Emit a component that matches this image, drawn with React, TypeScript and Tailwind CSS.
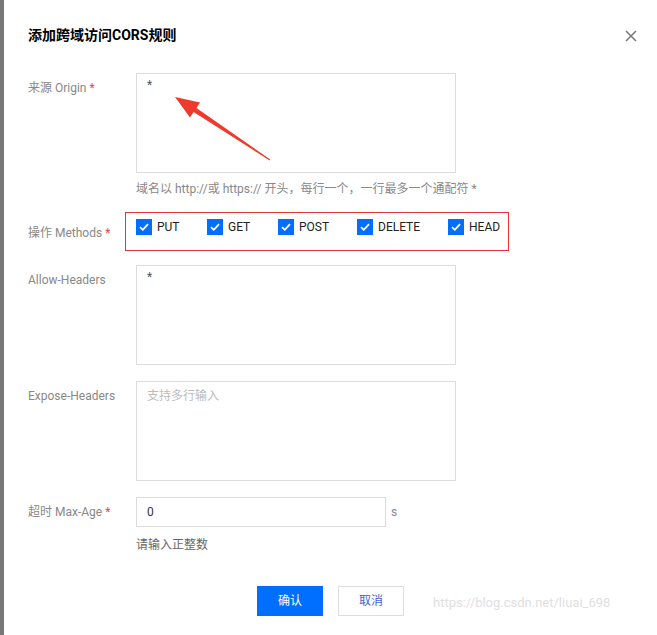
const methods = [
  { name: 'PUT', w: 'w-[71px]' },
  { name: 'GET', w: 'w-[71px]' },
  { name: 'POST', w: 'w-[79px]' },
  { name: 'DELETE', w: 'w-[91px]' },
  { name: 'HEAD', w: 'w-[55px]' },
];

function Check() {
  return (
    <span className="w-[16px] h-[16px] bg-[#006eff] flex items-center justify-center shrink-0">
      <svg width="10" height="8" viewBox="0 0 10 8" fill="none">
        <path d="M1 4.2 3.8 6.8 9 1.2" stroke="white" strokeWidth="1.8" />
      </svg>
    </span>
  );
}

function Label({ text, required, pt }: { text: string; required?: boolean; pt: string }) {
  return (
    <div className={`w-[108px] shrink-0 text-[12px] leading-[18px] text-[#888] ${pt}`}>
      {text}
      {required && <span className="text-[#e54545]"> *</span>}
    </div>
  );
}

export default function App() {
  return (
    <div
      className="relative w-[657px] h-[635px] bg-white flex overflow-hidden"
      style={{ fontFamily: 'Roboto, "Noto Sans CJK SC", sans-serif' }}
    >
      {/* overlay edge */}
      <div className="w-[4px] h-full bg-[#787878] shrink-0" />

      <div className="flex-1 pl-[24px] pt-[25px]">
        <div className="flex items-center justify-between pr-[20px] h-[20px]">
          <h1 className="text-[14px] leading-[20px] font-bold text-[#000]">添加跨域访问CORS规则</h1>
          <svg width="12" height="12" viewBox="0 0 12 12" className="mt-[2px]">
            <path d="M1 1 11 11M11 1 1 11" stroke="#777" strokeWidth="1.5" />
          </svg>
        </div>

        {/* Origin */}
        <div className="flex mt-[28px]">
          <Label text="来源 Origin" required pt="pt-[6px]" />
          <div className="w-[320px] h-[100px] border border-[#ddd] px-[10px] py-[2px] text-[12px] leading-[18px] text-[#555]">*</div>
        </div>
        <div className="ml-[108px] mt-[7px] text-[12px] leading-[18px] text-[#888]">
          域名以 http://或 https:// 开头，每行一个，一行最多一个通配符 *
        </div>

        {/* Methods */}
        <div className="flex mt-[14px]">
          <div className="w-[97px] shrink-0 text-[12px] leading-[18px] text-[#888] pt-[12px]">
            操作 Methods<span className="text-[#e54545]"> *</span>
          </div>
          <div className="w-[384px] h-[39px] border border-[#e0353d] flex items-start pl-[10px] pt-[6px]">
            {methods.map((m) => (
              <div key={m.name} className={`flex items-center gap-[5px] shrink-0 ${m.w}`}>
                <Check />
                <span className="text-[12px] leading-[16px] text-[#222]">{m.name}</span>
              </div>
            ))}
          </div>
        </div>

        {/* Allow-Headers */}
        <div className="flex mt-[14px]">
          <Label text="Allow-Headers" pt="pt-[6px]" />
          <div className="w-[320px] h-[100px] border border-[#ddd] px-[10px] py-[2px] text-[12px] leading-[18px] text-[#555]">*</div>
        </div>

        {/* Expose-Headers */}
        <div className="flex mt-[16px]">
          <Label text="Expose-Headers" pt="pt-[6px]" />
          <div className="w-[320px] h-[100px] border border-[#ddd] px-[10px] py-[5px] text-[12px] leading-[18px] text-[#bbb]">支持多行输入</div>
        </div>

        {/* Max-Age */}
        <div className="flex mt-[16px]">
          <Label text="超时 Max-Age" required pt="pt-[6px]" />
          <div className="w-[250px] h-[30px] border border-[#ddd] px-[10px] flex items-center text-[12px] text-[#333]">0</div>
          <span className="ml-[5px] text-[12px] leading-[30px] text-[#888]">s</span>
        </div>
        <div className="ml-[108px] mt-[9px] text-[12px] leading-[18px] text-[#666]">请输入正整数</div>

        {/* Buttons */}
        <div className="flex justify-center gap-[15px] mt-[32px] pr-[24px]">
          <button className="w-[66px] h-[30px] bg-[#006eff] text-white text-[12px]">确认</button>
          <button className="w-[66px] h-[30px] border border-[#ddd] bg-white text-[#3d63d3] text-[12px]">取消</button>
        </div>
      </div>

      {/* annotation arrow */}
      <svg className="absolute top-0 left-0 pointer-events-none" width="657" height="635" viewBox="0 0 657 635">
        <polygon
          points="175,97 200,102.5 196.4,107.9 270.3,159.6 269.7,160.4 193.6,112.1 190,117.5"
          fill="#f0392c"
        />
      </svg>

      {/* watermark */}
      <div className="absolute left-[433px] top-[594px] text-[13px] leading-[18px] text-[#e0e0e0]">
        https://blog.csdn.net/liuai_698
      </div>
    </div>
  );
}
